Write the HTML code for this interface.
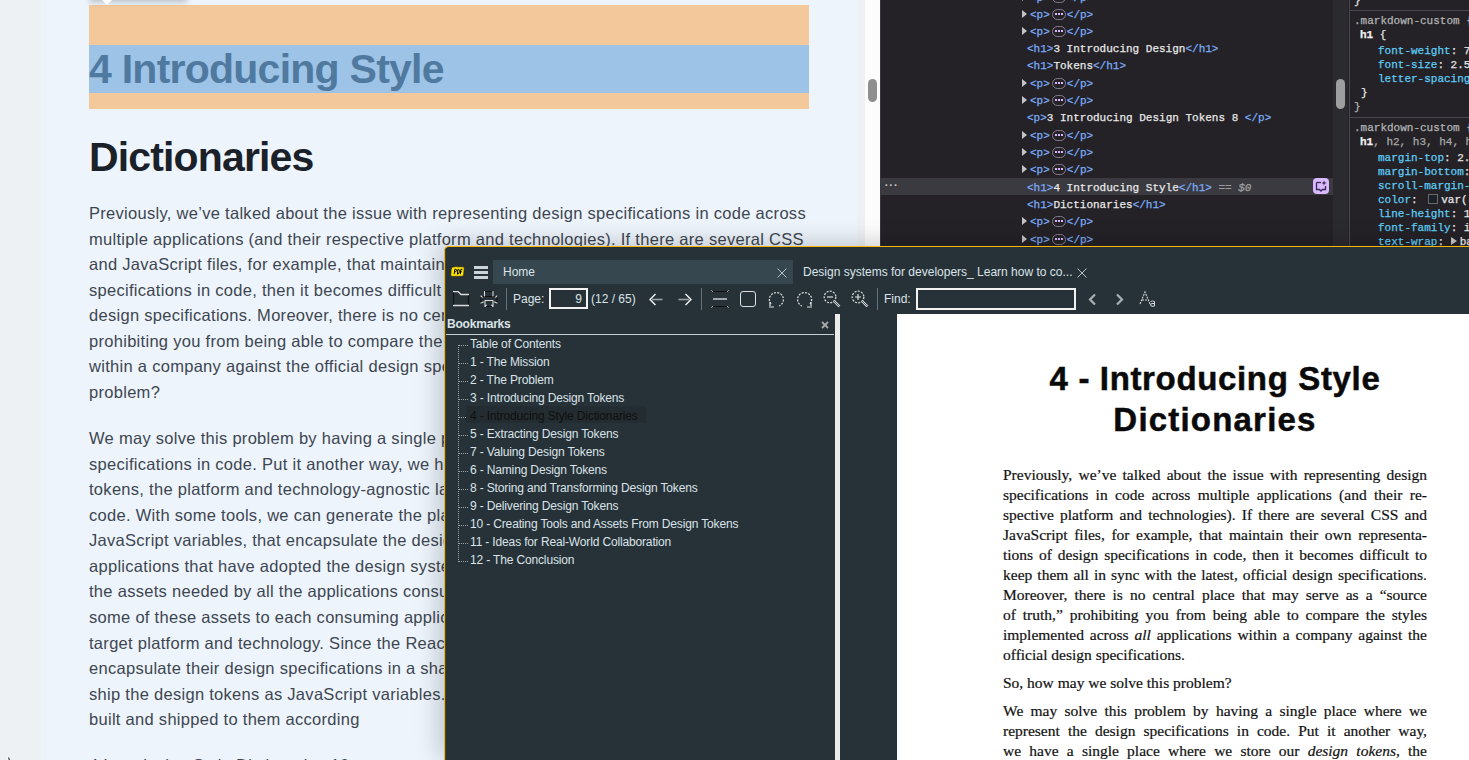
<!DOCTYPE html>
<html><head><meta charset="utf-8">
<style>
*{box-sizing:border-box;margin:0;padding:0}
html,body{width:1469px;height:760px;overflow:hidden}
body{position:relative;background:#eef1f4;font-family:"Liberation Sans",sans-serif}
.a{position:absolute}
.docp{position:absolute;left:89px;font-size:16.5px;letter-spacing:0.29px;color:#3d4650;white-space:nowrap;line-height:26px}
/* devtools */
#dt{position:absolute;left:880px;top:0;width:589px;height:246px;background:#242227;overflow:hidden;font-family:"Liberation Mono",monospace;font-size:11px}
.r{position:absolute;left:147px;height:17px;line-height:17px;white-space:nowrap;color:#e8e8e8;-webkit-text-stroke:0.25px currentColor}
.tg{color:#7cacf8}
.tri{position:absolute;left:-8px;top:2.5px;width:0;height:0;border-left:5px solid #c4c4c4;border-top:4px solid transparent;border-bottom:4px solid transparent}
.pill{display:inline-block;vertical-align:middle;width:14px;height:11px;border:1px solid #857c8e;border-radius:6px;position:relative;top:-1px;margin:0 1px 0 2px}
.pill:after{content:"";position:absolute;left:2px;top:3px;width:2px;height:2px;background:#d9b8ff;box-shadow:3px 0 0 #d9b8ff,6px 0 0 #d9b8ff}
.s{position:absolute;white-space:nowrap;line-height:14px;height:14px;color:#e8e8e8;-webkit-text-stroke:0.25px currentColor}
.pn{color:#5fcdf5}
/* pdf */
#pdf{position:absolute;left:444px;top:246px;width:1025px;height:514px;background:#263238;border-top:1px solid #ffb400;border-left:1px solid #ffb400;border-top-left-radius:5px;overflow:hidden;box-shadow:-5px -3px 24px rgba(0,0,0,0.2)}
.ui{font-family:"Liberation Sans",sans-serif;font-size:12px;color:#dce3e8;white-space:nowrap}
.bm{position:absolute;left:25px;height:18px;line-height:18px;letter-spacing:-0.15px}
.pg{position:absolute;font-family:"Liberation Serif",serif;font-size:15.5px;color:#111;-webkit-text-stroke:0.2px #111;white-space:nowrap;line-height:20px;height:20px;text-align:justify;text-align-last:justify}
</style></head><body>
<!-- left document -->
<div class="a" style="left:41px;top:0;width:816px;height:760px;background:#edf4fc"></div>
<div class="a" style="left:865px;top:0;width:15px;height:760px;background:#fcfcfc"></div>
<div class="a" style="left:868px;top:79px;width:9px;height:23px;border-radius:5px;background:#8f8f8f"></div>

<div class="a" style="left:89px;top:5px;width:720px;height:104px;background:#f3c99c"></div>
<div class="a" style="left:90px;top:-30px;width:97px;height:30px;background:#fff;box-shadow:0 2px 6px rgba(60,64,67,0.3)"></div>
<div class="a" style="left:102px;top:0px;width:0;height:0;border-left:5px solid transparent;border-right:5px solid transparent;border-top:5px solid #fff"></div>
<div class="a" style="left:89px;top:45px;width:720px;height:48px;background:#9dc3e6"></div>
<div class="a" style="left:89px;top:45px;height:48px;line-height:48px;font-size:41px;font-weight:bold;color:#5079a0;letter-spacing:-0.75px;white-space:nowrap">4 Introducing Style</div>
<div class="a" style="left:89px;top:133px;height:48px;line-height:48px;font-size:41px;font-weight:bold;color:#1b2128;letter-spacing:-0.85px;white-space:nowrap">Dictionaries</div>

<div class="docp" style="top:200px">Previously, we’ve talked about the issue with representing design specifications in code across</div>
<div class="docp" style="top:226px">multiple applications (and their respective platform and technologies). If there are several CSS</div>
<div class="docp" style="top:251px">and JavaScript files, for example, that maintain their own representations of design</div>
<div class="docp" style="top:277px">specifications in code, then it becomes difficult to keep them all in sync with the latest, official</div>
<div class="docp" style="top:302px">design specifications. Moreover, there is no central place that may serve as a “source of truth,”</div>
<div class="docp" style="top:328px">prohibiting you from being able to compare the styles implemented across all applications</div>
<div class="docp" style="top:353px">within a company against the official design specifications. So, how may we solve this</div>
<div class="docp" style="top:379px">problem?</div>
<div class="docp" style="top:425px">We may solve this problem by having a single place where we represent the design</div>
<div class="docp" style="top:451px">specifications in code. Put it another way, we have a single place where we store our design</div>
<div class="docp" style="top:476px">tokens, the platform and technology-agnostic language of design specifications in</div>
<div class="docp" style="top:502px">code. With some tools, we can generate the platform-specific assets, such as CSS and</div>
<div class="docp" style="top:527px">JavaScript variables, that encapsulate the design specifications for all consuming</div>
<div class="docp" style="top:553px">applications that have adopted the design system. From this single place, we can generate</div>
<div class="docp" style="top:578px">the assets needed by all the applications consuming the design system, and distribute</div>
<div class="docp" style="top:604px">some of these assets to each consuming application according to their</div>
<div class="docp" style="top:630px">target platform and technology. Since the React applications</div>
<div class="docp" style="top:655px">encapsulate their design specifications in a shared library</div>
<div class="docp" style="top:681px">ship the design tokens as JavaScript variables. The</div>
<div class="docp" style="top:706px">built and shipped to them according</div>
<div class="docp" style="top:752px">4 Introducing Style Dictionaries 10</div>
<svg class="a" style="left:6px;top:755px" width="6" height="5" viewBox="0 0 6 5"><path d="M2 1 L2 5 L5 5Z" fill="#000" stroke="#fff" stroke-width="0.8"/></svg>
<div id="dt">
<div class="a" style="left:0;top:0;width:1px;height:246px;background:#3b3646"></div>
<div class="a" style="left:0;top:178px;width:453px;height:17px;background:#3b3a40"></div>
<div class="a" style="left:3px;top:178px;height:17px;line-height:15px;color:#d0d0d0;font-size:11px;font-weight:bold;letter-spacing:-2px">···</div>
<div class="r" style="top:-10px;left:150px"><i class="tri"></i><span class="tg">&lt;p&gt;</span><i class="pill"></i><span class="tg">&lt;/p&gt;</span></div>
<div class="r" style="top:7px;left:150px"><i class="tri"></i><span class="tg">&lt;p&gt;</span><i class="pill"></i><span class="tg">&lt;/p&gt;</span></div>
<div class="r" style="top:24px;left:150px"><i class="tri"></i><span class="tg">&lt;p&gt;</span><i class="pill"></i><span class="tg">&lt;/p&gt;</span></div>
<div class="r" style="top:41px"><span class="tg">&lt;h1&gt;</span>3 Introducing Design<span class="tg">&lt;/h1&gt;</span></div>
<div class="r" style="top:58px"><span class="tg">&lt;h1&gt;</span>Tokens<span class="tg">&lt;/h1&gt;</span></div>
<div class="r" style="top:76px;left:150px"><i class="tri"></i><span class="tg">&lt;p&gt;</span><i class="pill"></i><span class="tg">&lt;/p&gt;</span></div>
<div class="r" style="top:93px;left:150px"><i class="tri"></i><span class="tg">&lt;p&gt;</span><i class="pill"></i><span class="tg">&lt;/p&gt;</span></div>
<div class="r" style="top:110px"><span class="tg">&lt;p&gt;</span>3 Introducing Design Tokens 8 <span class="tg">&lt;/p&gt;</span></div>
<div class="r" style="top:128px;left:150px"><i class="tri"></i><span class="tg">&lt;p&gt;</span><i class="pill"></i><span class="tg">&lt;/p&gt;</span></div>
<div class="r" style="top:145px;left:150px"><i class="tri"></i><span class="tg">&lt;p&gt;</span><i class="pill"></i><span class="tg">&lt;/p&gt;</span></div>
<div class="r" style="top:162px;left:150px"><i class="tri"></i><span class="tg">&lt;p&gt;</span><i class="pill"></i><span class="tg">&lt;/p&gt;</span></div>
<div class="r" style="top:180px"><span class="tg">&lt;h1&gt;</span>4 Introducing Style<span class="tg">&lt;/h1&gt;</span> <span style="color:#9e9e9e;font-style:italic">== $0</span></div>
<div class="r" style="top:197px"><span class="tg">&lt;h1&gt;</span>Dictionaries<span class="tg">&lt;/h1&gt;</span></div>
<div class="r" style="top:214px;left:150px"><i class="tri"></i><span class="tg">&lt;p&gt;</span><i class="pill"></i><span class="tg">&lt;/p&gt;</span></div>
<div class="r" style="top:232px;left:150px"><i class="tri"></i><span class="tg">&lt;p&gt;</span><i class="pill"></i><span class="tg">&lt;/p&gt;</span></div>
<div class="a" style="left:433px;top:178px;width:16px;height:16px;border-radius:4px;background:#d9b9ff"><svg width="16" height="16" viewBox="0 0 16 16" style="position:absolute;left:0;top:0"><path d="M3.5 4.5 V11.5 H6.5 L8 13 L9.5 11.5 H12.5 V8" fill="none" stroke="#3a2a55" stroke-width="1.3"/><path d="M3.5 4.5 H8" fill="none" stroke="#3a2a55" stroke-width="1.3"/><path d="M11 2.5 L11.7 4.3 L13.5 5 L11.7 5.7 L11 7.5 L10.3 5.7 L8.5 5 L10.3 4.3Z" fill="#3a2a55"/></svg></div>
<div class="a" style="left:453px;top:0;width:15px;height:246px;background:#2b2a2f"></div>
<div class="a" style="left:456px;top:79px;width:9px;height:30px;border-radius:5px;background:#9e9e9e"></div>
<div class="a" style="left:469px;top:0;width:1px;height:246px;background:#4a4750"></div>
<div class="a" style="left:469px;top:10px;width:130px;height:1px;background:#4a4750"></div>
<div class="a" style="left:469px;top:117px;width:130px;height:1px;background:#4a4750"></div>
<div class="s" style="left:474px;top:-6px"><span style="color:#e3e3e3">}</span></div>
<div class="s" style="left:474px;top:14px"><span style="color:#b4b4b4">.markdown-custom {</span></div>
<div class="s" style="left:480px;top:28px"><span style="color:#f0f0f0;font-weight:bold">h1</span> <span style="color:#e3e3e3">{</span></div>
<div class="s" style="left:498px;top:44px"><span class="pn">font-weight</span>: 700;</div>
<div class="s" style="left:498px;top:58px"><span class="pn">font-size</span>: 2.5rem;</div>
<div class="s" style="left:498px;top:72px"><span class="pn">letter-spacing</span>: -0.02em;</div>
<div class="s" style="left:481px;top:86px">}</div>
<div class="s" style="left:474px;top:100px"><span style="color:#b4b4b4">}</span></div>
<div class="s" style="left:474px;top:121px"><span style="color:#b4b4b4">.markdown-custom {</span></div>
<div class="s" style="left:480px;top:135px"><span style="color:#f0f0f0;font-weight:bold">h1</span><span style="color:#a8a8a8">, h2, h3, h4, h5</span></div>
<div class="s" style="left:498px;top:151px"><span class="pn">margin-top</span>: 2.5rem;</div>
<div class="s" style="left:498px;top:165px"><span class="pn">margin-bottom</span>: 1rem;</div>
<div class="s" style="left:498px;top:179px"><span class="pn">scroll-margin-top</span>: 1rem;</div>
<div class="s" style="left:498px;top:193px"><span class="pn">color</span>: <i style="display:inline-block;width:10px;height:10px;border:1px solid #6a6a6a;background:#1b2128;vertical-align:-1px;margin:0 3px 0 4px"></i>var(--text);</div>
<div class="s" style="left:498px;top:207px"><span class="pn">line-height</span>: 1.2;</div>
<div class="s" style="left:498px;top:221px"><span class="pn">font-family</span>: inter;</div>
<div class="s" style="left:498px;top:235px"><span class="pn">text-wrap</span>: <i style="display:inline-block;width:0;height:0;border-left:6px solid #c4c4c4;border-top:4px solid transparent;border-bottom:4px solid transparent;vertical-align:0px;margin-right:3px"></i>balance;</div>
</div>
<div id="pdf" class="ui">
<svg class="a" style="left:5px;top:19px" width="15" height="11" viewBox="0 0 15 11"><path d="M2.5 1.2 Q5 0.2 8 0.8 L13.2 0.8 Q14.6 1 14.2 3 L13.6 9 Q13.3 10.5 11.5 10.3 L1.8 10.4 Q0.6 10.2 0.8 8.5 L1.2 3.2 Q1.3 1.8 2.5 1.2Z" fill="#ffe600" stroke="#222" stroke-width="0.7"/><path d="M4.2 8.2 L4.8 3.3 H5.9 Q6.8 3.5 6.5 4.8 Q6.2 5.8 5.2 5.8 M7.3 8.2 L7.9 3.3 H8.6 Q9.7 3.6 9.4 5.8 Q9.1 8.1 7.3 8.2 M10.3 8.2 L10.9 3.3 H12.4 M10.6 5.8 H11.8" stroke="#000" stroke-width="1" fill="none"/></svg>
<div class="a" style="left:29px;top:19px;width:14px;height:3px;background:#c9d3d9;box-shadow:0 5px 0 #c9d3d9,0 10px 0 #c9d3d9"></div>
<div class="a" style="left:48px;top:13px;width:300px;height:24px;background:#37474f"></div>
<div class="a" style="left:58px;top:13px;height:24px;line-height:24px;color:#dbe3e8">Home</div>
<svg class="a" style="left:332px;top:21px" width="10" height="10" viewBox="0 0 10 10"><path d="M0.5 0.5 L9.5 9.5 M9.5 0.5 L0.5 9.5" stroke="#b9c2c7" stroke-width="1" fill="none"/></svg>
<div class="a" style="left:358px;top:13px;height:24px;line-height:24px;color:#dbe3e8">Design systems for developers_ Learn how to co...</div>
<svg class="a" style="left:632px;top:21px" width="10" height="10" viewBox="0 0 10 10"><path d="M0.5 0.5 L9.5 9.5 M9.5 0.5 L0.5 9.5" stroke="#b9c2c7" stroke-width="1" fill="none"/></svg>
<svg class="a" style="left:8px;top:44px" width="17" height="16" viewBox="0 0 17 16"><path d="M0.5 0.5 V14.5 M15.5 3.5 V14.5" stroke="#111" stroke-width="1.2" fill="none"/><path d="M0.5 0.5 H5 L8 3.5 H15.5 M0.5 14.5 H15.5" stroke="#dcdcdc" stroke-width="1.3" fill="none" stroke-linecap="round"/></svg>
<svg class="a" style="left:35px;top:44px" width="18" height="17" viewBox="0 0 18 17"><path d="M4.5 0.5 H13 M1 5.5 H17 M1 5.5 V12 M17 5.5 V12 M5 15.5 H13" stroke="#111" stroke-width="1" fill="none"/><path d="M4.5 0.5 V5 M13 0.5 V5 M1 5 L2.2 6.2 M16.8 5 L15.6 6.2 M1 12 L3.5 11 M17 12 L14.5 11 M5 9.5 H13 M5 9.5 V15.5 M13 9.5 V15.5 M5 15.5 L6.3 14.2 M13 15.5 L11.7 14.2" stroke="#dcdcdc" stroke-width="1.1" fill="none" stroke-linecap="round"/></svg>
<div class="a" style="left:61px;top:41px;width:1px;height:22px;background:#66757c"></div>
<div class="a" style="left:68px;top:41px;height:22px;line-height:22px;color:#dbe3e8">Page:</div>
<div class="a" style="left:104px;top:41px;width:39px;height:21px;border:2px solid #f2f2f2;background:#263238;color:#dbe3e8;text-align:right;padding-right:4px;line-height:18px">9</div>
<div class="a" style="left:146px;top:41px;height:22px;line-height:22px;color:#dbe3e8">(12 / 65)</div>
<svg class="a" style="left:204px;top:46px" width="14" height="13" viewBox="0 0 14 13"><path d="M13.5 6.5 H3" stroke="#9aa0a3" stroke-width="1.6"/><path d="M6.5 1 L1 6.5 L6.5 12" stroke="#f4f4f4" stroke-width="1.4" fill="none"/></svg>
<svg class="a" style="left:233px;top:46px" width="14" height="13" viewBox="0 0 14 13"><path d="M0.5 6.5 H11" stroke="#9aa0a3" stroke-width="1.6"/><path d="M7.5 1 L13 6.5 L7.5 12" stroke="#f4f4f4" stroke-width="1.4" fill="none"/></svg>
<div class="a" style="left:256px;top:41px;width:1px;height:22px;background:#66757c"></div>
<svg class="a" style="left:266px;top:43px" width="18" height="18" viewBox="0 0 18 18"><path d="M1 1.5 H17 M1 16.5 H17" stroke="#111" stroke-width="1" fill="none"/><path d="M0.5 0.5 L1.8 1.8 M17.5 0.5 L16.2 1.8 M0.5 17.5 L1.8 16.2 M17.5 17.5 L16.2 16.2" stroke="#dcdcdc" stroke-width="1" fill="none"/><path d="M2 9 H16" stroke="#a0a6a9" stroke-width="2"/></svg>
<svg class="a" style="left:294px;top:43px" width="18" height="18" viewBox="0 0 18 18"><rect x="1.5" y="1.5" width="15" height="15" rx="2.5" fill="none" stroke="#e0e0e0" stroke-width="1"/></svg>
<svg class="a" style="left:322px;top:43px" width="18" height="18" viewBox="0 0 18 18"><path d="M4 14 A7 7 0 1 1 12 16" fill="none" stroke="#d8d8d8" stroke-width="1.3" stroke-dasharray="2 1.3"/><path d="M2 17 H7 M3 12 L3 16" stroke="#e0e0e0" stroke-width="1.2" fill="none"/></svg>
<svg class="a" style="left:351px;top:43px" width="18" height="18" viewBox="0 0 18 18"><path d="M14 14 A7 7 0 1 0 6 16" fill="none" stroke="#d8d8d8" stroke-width="1.3" stroke-dasharray="2 1.3"/><path d="M11 17 H16 M15 12 L15 16" stroke="#e0e0e0" stroke-width="1.2" fill="none"/></svg>
<svg class="a" style="left:378px;top:43px" width="18" height="18" viewBox="0 0 18 18"><circle cx="7" cy="7" r="5.8" fill="none" stroke="#d8d8d8" stroke-width="1.3" stroke-dasharray="2 1.3"/><path d="M11 11 L16.5 16.5" stroke="#e0e0e0" stroke-width="2.4"/><path d="M11 11 L16.5 16.5" stroke="#263238" stroke-width="0.8"/><path d="M4 7 H10" stroke="#e0e0e0" stroke-width="1.2"/></svg>
<svg class="a" style="left:406px;top:43px" width="18" height="18" viewBox="0 0 18 18"><circle cx="7" cy="7" r="5.8" fill="none" stroke="#d8d8d8" stroke-width="1.3" stroke-dasharray="2 1.3"/><path d="M11 11 L16.5 16.5" stroke="#e0e0e0" stroke-width="2.4"/><path d="M11 11 L16.5 16.5" stroke="#263238" stroke-width="0.8"/><path d="M4 7 H10 M7 4 V10" stroke="#e0e0e0" stroke-width="1.2"/></svg>
<div class="a" style="left:432px;top:41px;width:1px;height:22px;background:#66757c"></div>
<div class="a" style="left:439px;top:41px;height:22px;line-height:22px;color:#dbe3e8">Find:</div>
<div class="a" style="left:471px;top:41px;width:160px;height:22px;border:2px solid #f2f2f2;background:#263238"></div>
<svg class="a" style="left:642px;top:46px" width="10" height="13" viewBox="0 0 10 13"><path d="M8 1.5 L3 6.5 L8 11.5" stroke="#a9b0b3" stroke-width="2.2" fill="none"/></svg>
<svg class="a" style="left:670px;top:46px" width="10" height="13" viewBox="0 0 10 13"><path d="M2 1.5 L7 6.5 L2 11.5" stroke="#a9b0b3" stroke-width="2.2" fill="none"/></svg>
<svg class="a" style="left:694px;top:43px" width="18" height="18" viewBox="0 0 18 18"><path d="M1 14 L6 2 L11 14 M3 10 H9" stroke="#d8d8d8" stroke-width="1.1" fill="none" stroke-dasharray="2 1"/><path d="M11.5 11.5 Q13.5 10.5 15.5 11.5 V16 M15.5 13.5 H13 Q11.5 13.7 11.5 15 Q11.6 16.2 13 16.2 H15.5" stroke="#d8d8d8" stroke-width="1" fill="none"/></svg>
<div class="a" style="left:2px;top:67px;height:20px;line-height:20px;font-weight:bold;color:#dbe3e8;letter-spacing:-0.2px">Bookmarks</div>
<svg class="a" style="left:376px;top:74px" width="8" height="8" viewBox="0 0 8 8"><path d="M1 1 L7 7 M7 1 L1 7" stroke="#a8a8a8" stroke-width="1.8"/></svg>
<div class="a" style="left:0;top:87px;width:389px;height:1px;background:#c9cdd0"></div>
<div class="a" style="left:0;top:0;width:1px;height:520px;background:#3a4950"></div>
<div class="a" style="left:13px;top:98px;width:1px;height:218px;background-image:linear-gradient(#a2a2a2 50%,transparent 50%);background-size:1px 2px"></div>
<div class="a" style="left:14px;top:98.2px;width:9px;height:1px;background-image:linear-gradient(90deg,#a2a2a2 50%,transparent 50%);background-size:2px 1px"></div>
<div class="bm" style="top:87.7px">Table of Contents</div>
<div class="a" style="left:14px;top:116.2px;width:9px;height:1px;background-image:linear-gradient(90deg,#a2a2a2 50%,transparent 50%);background-size:2px 1px"></div>
<div class="bm" style="top:105.7px">1 - The Mission</div>
<div class="a" style="left:14px;top:134.2px;width:9px;height:1px;background-image:linear-gradient(90deg,#a2a2a2 50%,transparent 50%);background-size:2px 1px"></div>
<div class="bm" style="top:123.7px">2 - The Problem</div>
<div class="a" style="left:14px;top:152.2px;width:9px;height:1px;background-image:linear-gradient(90deg,#a2a2a2 50%,transparent 50%);background-size:2px 1px"></div>
<div class="bm" style="top:141.7px">3 - Introducing Design Tokens</div>
<div class="a" style="left:14px;top:170.2px;width:9px;height:1px;background-image:linear-gradient(90deg,#a2a2a2 50%,transparent 50%);background-size:2px 1px"></div>
<div class="a" style="left:21px;top:159.2px;width:180px;height:17px;background:#222c31"></div>
<div class="bm" style="top:159.7px;color:#101010">4 - Introducing Style Dictionaries</div>
<div class="a" style="left:14px;top:188.2px;width:9px;height:1px;background-image:linear-gradient(90deg,#a2a2a2 50%,transparent 50%);background-size:2px 1px"></div>
<div class="bm" style="top:177.7px">5 - Extracting Design Tokens</div>
<div class="a" style="left:14px;top:206.2px;width:9px;height:1px;background-image:linear-gradient(90deg,#a2a2a2 50%,transparent 50%);background-size:2px 1px"></div>
<div class="bm" style="top:195.7px">7 - Valuing Design Tokens</div>
<div class="a" style="left:14px;top:224.2px;width:9px;height:1px;background-image:linear-gradient(90deg,#a2a2a2 50%,transparent 50%);background-size:2px 1px"></div>
<div class="bm" style="top:213.7px">6 - Naming Design Tokens</div>
<div class="a" style="left:14px;top:242.2px;width:9px;height:1px;background-image:linear-gradient(90deg,#a2a2a2 50%,transparent 50%);background-size:2px 1px"></div>
<div class="bm" style="top:231.7px">8 - Storing and Transforming Design Tokens</div>
<div class="a" style="left:14px;top:260.2px;width:9px;height:1px;background-image:linear-gradient(90deg,#a2a2a2 50%,transparent 50%);background-size:2px 1px"></div>
<div class="bm" style="top:249.7px">9 - Delivering Design Tokens</div>
<div class="a" style="left:14px;top:278.2px;width:9px;height:1px;background-image:linear-gradient(90deg,#a2a2a2 50%,transparent 50%);background-size:2px 1px"></div>
<div class="bm" style="top:267.7px">10 - Creating Tools and Assets From Design Tokens</div>
<div class="a" style="left:14px;top:296.2px;width:9px;height:1px;background-image:linear-gradient(90deg,#a2a2a2 50%,transparent 50%);background-size:2px 1px"></div>
<div class="bm" style="top:285.7px">11 - Ideas for Real-World Collaboration</div>
<div class="a" style="left:14px;top:314.2px;width:9px;height:1px;background-image:linear-gradient(90deg,#a2a2a2 50%,transparent 50%);background-size:2px 1px"></div>
<div class="bm" style="top:303.7px">12 - The Conclusion</div>
<div class="a" style="left:390px;top:67px;width:5px;height:450px;background:#ececec"></div>
<div class="a" style="left:452px;top:67px;width:600px;height:450px;background:#fff"></div>
<div class="a" style="left:458px;top:111px;width:624px;text-align:center;font-family:'Liberation Sans',sans-serif;font-weight:bold;font-size:33px;letter-spacing:0.65px;line-height:41px;color:#0a0a0a;-webkit-text-stroke:0.5px #0a0a0a;white-space:nowrap">4 - Introducing Style<br><span style="letter-spacing:1.2px">Dictionaries</span></div>
<div class="pg" style="left:558px;top:218px;width:424px;">Previously, we’ve talked about the issue with representing design</div>
<div class="pg" style="left:558px;top:238px;width:424px;">specifications in code across multiple applications (and their re-</div>
<div class="pg" style="left:558px;top:258px;width:424px;">spective platform and technologies). If there are several CSS and</div>
<div class="pg" style="left:558px;top:278px;width:424px;">JavaScript files, for example, that maintain their own representa-</div>
<div class="pg" style="left:558px;top:298px;width:424px;">tions of design specifications in code, then it becomes difficult to</div>
<div class="pg" style="left:558px;top:318px;width:424px;">keep them all in sync with the latest, official design specifications.</div>
<div class="pg" style="left:558px;top:338px;width:424px;">Moreover, there is no central place that may serve as a “source</div>
<div class="pg" style="left:558px;top:358px;width:424px;">of truth,” prohibiting you from being able to compare the styles</div>
<div class="pg" style="left:558px;top:378px;width:424px;">implemented across <i>all</i> applications within a company against the</div>
<div class="pg" style="left:558px;top:398px;width:424px;text-align:left;text-align-last:left">official design specifications.</div>
<div class="pg" style="left:558px;top:426px;width:424px;text-align:left;text-align-last:left">So, how may we solve this problem?</div>
<div class="pg" style="left:558px;top:454px;width:424px;">We may solve this problem by having a single place where we</div>
<div class="pg" style="left:558px;top:474px;width:424px;">represent the design specifications in code. Put it another way,</div>
<div class="pg" style="left:558px;top:494px;width:424px;">we have a single place where we store our <i>design tokens</i>, the</div>
<div class="pg" style="left:558px;top:514px;width:424px;">platform and technology-agnostic language of design specifications</div>
</div>
</body></html>
